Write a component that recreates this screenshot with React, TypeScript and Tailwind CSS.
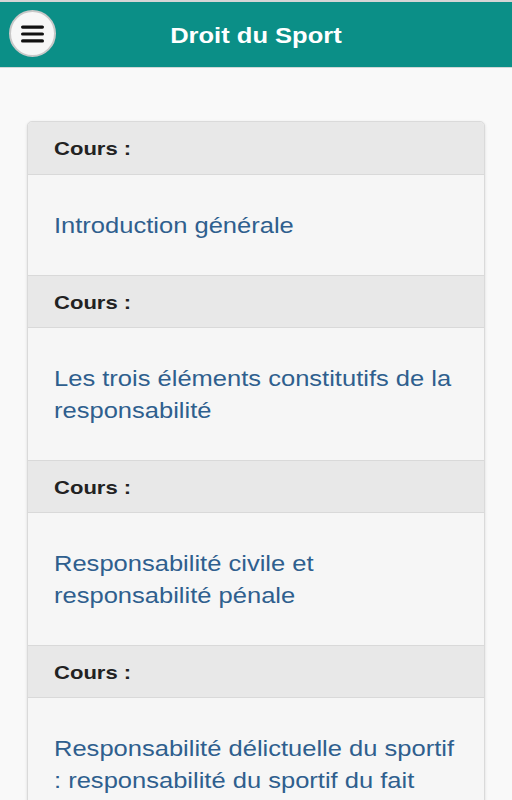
import React from 'react'

const items = [
  'Introduction générale',
  'Les trois éléments constitutifs de la responsabilité',
  'Responsabilité civile et responsabilité pénale',
  'Responsabilité délictuelle du sportif : responsabilité du sportif du fait personnel',
]

const App = () => {
  return (
    <div className="min-h-[800px] bg-[#f9f9f9] font-['Liberation_Sans',Arial,sans-serif]">
      <div className="h-[2px] bg-[#d5d5d5]" />
      <div className="relative flex h-[66px] items-center justify-center bg-[#0b8f87] pt-[2px] border-b border-[#cfd8d7]">
        <button className="absolute left-[9px] top-[8px] flex h-[47px] w-[47px] items-center justify-center rounded-full border-2 border-[#c8c8c8] bg-[#f7f7f7]">
          <svg width="23" height="18" viewBox="0 0 23 18">
            <rect x="0" y="0.5" width="23" height="3.2" rx="1.6" fill="#111" />
            <rect x="0" y="7.4" width="23" height="3.2" rx="1.6" fill="#111" />
            <rect x="0" y="14.3" width="23" height="3.2" rx="1.6" fill="#111" />
          </svg>
        </button>
        <h1 className="scale-x-[1.16] text-[22px] font-bold text-white">Droit du Sport</h1>
      </div>

      <div className="px-[27px] pt-[53px]">
        <div className="overflow-hidden rounded-[5px] border border-[#dadada] bg-[#f6f6f6] shadow-[0_1px_3px_rgba(0,0,0,0.12)]">
          {items.map((t, i) => (
            <div key={i}>
              <div className={`flex h-[53px] items-center bg-[#e8e8e8] px-[26px] pt-[3px] border-b border-[#d9d9d9] ${i > 0 ? 'border-t' : ''}`}>
                <span className="origin-left scale-x-[1.16] text-[19px] font-bold text-[#222]">Cours :</span>
              </div>
              <div className="px-[26px] pt-[35px] pb-[33px]">
                <a className="block w-[350px] origin-left scale-x-[1.16] text-[22px] leading-[32px] text-[#2f5f8e]">{t}</a>
              </div>
            </div>
          ))}
        </div>
      </div>
    </div>
  )
}

export default App
